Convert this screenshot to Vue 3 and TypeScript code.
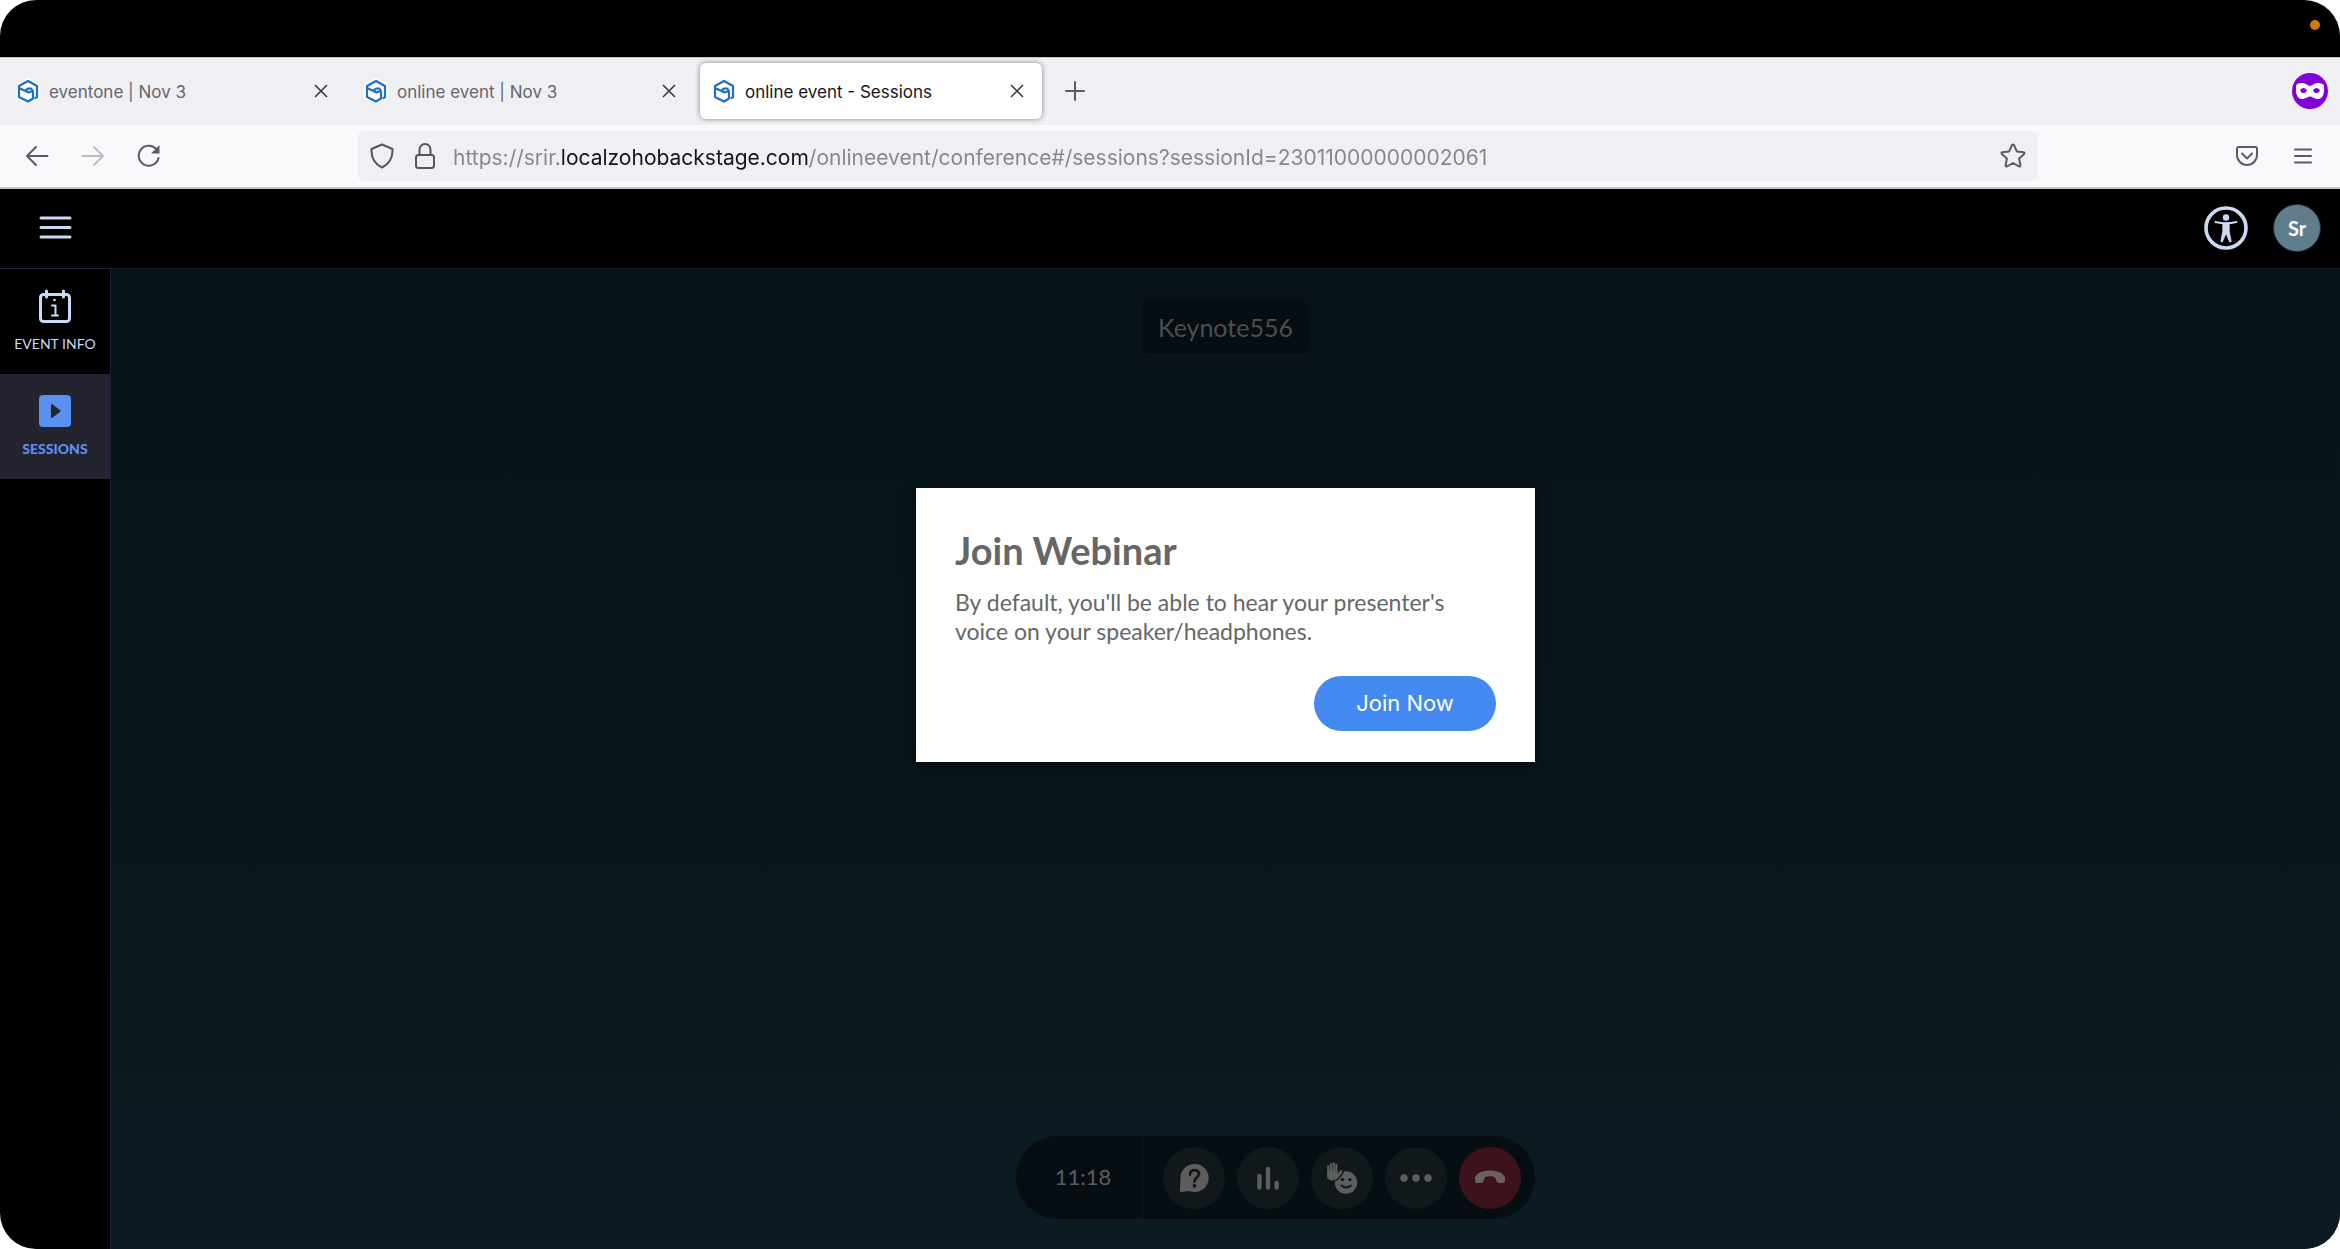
<script setup lang="ts">
import { ref } from 'vue'

interface Tab {
  title: string
  active: boolean
}

const tabs: Tab[] = [
  { title: 'eventone | Nov 3', active: false },
  { title: 'online event | Nov 3', active: false },
  { title: 'online event - Sessions', active: true },
]

const address = ref('https://srir.localzohobackstage.com/onlineevent/conference#/sessions?sessionId=23011000000002061')
</script>

<template>
  <div class="screen">
    <div class="menubar"><span class="recording-dot"></span></div>

    <div class="tabstrip">
      <div v-for="tab in tabs" :key="tab.title" class="tab" :class="{ active: tab.active }">
        <svg class="favicon" viewBox="0 0 24 26" fill="none">
          <path d="M12 1 23 7v13L12 25 1 20V7z" fill="#fff" stroke="#fff" stroke-width="2" stroke-linejoin="round" />
          <path d="M3 10V8l9-5 9 5v11l-1.500 1M3 10v9l9 4.500 5-3v-6.500c0-3.500-3-4.500-5.500-3l-2.500 1.800 3.500 1.700 3.500-1.500M3 10l6 2.800" stroke="#1a70c4" stroke-width="2.200" stroke-linejoin="round" stroke-linecap="round" />
        </svg>
        <span class="tab-title">{{ tab.title }}</span>
        <button class="plain" aria-label="Close tab">
          <svg width="14" height="14" viewBox="0 0 14 14" fill="none" stroke="#33333b" stroke-width="1.500"><path d="M1 1l12 12M13 1 1 13" /></svg>
        </button>
      </div>
      <button class="plain new-tab" aria-label="New tab">
        <svg width="20" height="20" viewBox="0 0 20 20" fill="none" stroke="#5b5b66" stroke-width="2" stroke-linecap="round"><path d="M10 1v18M1 10h18" /></svg>
      </button>
      <svg class="private" width="36" height="36" viewBox="0 0 36 36">
        <circle cx="18" cy="18" r="18" fill="#8000d7" />
        <path fill="#fff" fill-rule="evenodd" d="M4 13c0-2 3-3 6-3 4 0 6 3 8 3s4-3 8-3c3 0 6 1 6 3v4c0 5-2 9-6 9-4 0-5.500-2.500-8-2.500S14 26 10 26c-4 0-6-4-6-9zM8 17.500c1.500 3.400 5.500 3.400 7 0-1.500-3.400-5.500-3.400-7 0zm13 0c1.500 3.400 5.500 3.400 7 0-1.500-3.400-5.500-3.400-7 0z" />
      </svg>
    </div>

    <div class="toolbar">
      <div class="history">
        <button class="plain" aria-label="Back">
          <svg width="24" height="24" viewBox="0 0 24 24" fill="none" stroke="#5b5b66" stroke-width="2" stroke-linecap="round" stroke-linejoin="round"><path d="M22.500 12H2M11 3 2 12l9 9" /></svg>
        </button>
        <button class="plain" aria-label="Forward" disabled>
          <svg width="24" height="24" viewBox="0 0 24 24" fill="none" stroke="#bdbdc2" stroke-width="2" stroke-linecap="round" stroke-linejoin="round"><path d="M1.500 12H22M13 3l9 9-9 9" /></svg>
        </button>
        <button class="plain" aria-label="Reload">
          <svg width="24" height="24" viewBox="0 0 24 24" fill="none"><path d="M19 4.800A10 10 0 1 0 21.500 14" stroke="#5b5b66" stroke-width="2" stroke-linecap="round" /><path d="M22.500 1v8.500H14z" fill="#5b5b66" /></svg>
        </button>
      </div>
      <div class="address-bar">
        <svg width="24" height="26" viewBox="0 0 24 26" fill="none" stroke="#55555c" stroke-width="2" stroke-linejoin="round"><path d="M12 1.500 22.500 6c.4 8-2.500 14.500-10.500 18.500C4 20.500 1.100 14 1.500 6z" /></svg>
        <svg width="20" height="26" viewBox="0 0 20 26" fill="none" stroke="#55555c" stroke-width="2"><rect x="1" y="12" width="18" height="13" rx="2.500" /><path d="M4.500 12V6.500a5.500 5.500 0 0 1 11 0V12" /></svg>
        <input v-model="address" class="address" type="text" aria-label="Address" spellcheck="false" />
        <button class="plain" aria-label="Bookmark this page">
          <svg width="26" height="26" viewBox="0 0 26 26" fill="none" stroke="#5b5b66" stroke-width="2" stroke-linejoin="round"><path d="M12 2.200q1-1.400 2 0l2.800 6.200 6.800.8q1.500.4.500 1.700l-5 4.700 1.300 6.800q0 1.500-1.400 1L13 20l-6 3.400q-1.400.5-1.400-1l1.300-6.800-5-4.700q-1-1.300.5-1.700l6.800-.8z" /></svg>
        </button>
      </div>
      <div class="tools">
        <button class="plain" aria-label="Save to Pocket">
          <svg width="22" height="20" viewBox="0 0 22 20" fill="none" stroke="#5b5b66" stroke-width="2" stroke-linecap="round" stroke-linejoin="round"><path d="M3 1h16a2 2 0 0 1 2 2v6a10 10 0 0 1-20 0V3a2 2 0 0 1 2-2zM6 7.500l5 5 5-5" /></svg>
        </button>
        <button class="plain" aria-label="Open application menu">
          <svg width="18" height="16" viewBox="0 0 18 16" stroke="#5b5b66" stroke-width="2" stroke-linecap="round"><path d="M1 1.500h16M1 8h16M1 14.500h16" /></svg>
        </button>
      </div>
    </div>

    <header class="app-header">
      <button class="plain" aria-label="Menu">
        <svg width="33" height="23" viewBox="0 0 33 23" stroke="#cbdaf3" stroke-width="3" stroke-linecap="round"><path d="M2 2h29M2 11.500h29M2 21h29" /></svg>
      </button>
      <div class="account">
        <button class="plain" aria-label="Accessibility">
          <svg width="44" height="44" viewBox="0 0 44 44" fill="none" stroke="#cbdaf3">
            <circle cx="22" cy="22" r="20" stroke-width="3.600" />
            <circle cx="22" cy="11.500" r="3.200" fill="#cbdaf3" stroke="none" />
            <path d="M11.500 16q10.500 2.500 21 0" stroke-width="2" stroke-linecap="round" />
            <path d="M18.800 17h6.400v8l2 10.500-1.500.5L22 27.500 18.300 36l-1.500-.5 2-10.500z" fill="#cbdaf3" stroke-width=".8" stroke-linejoin="round" />
          </svg>
        </button>
        <button class="avatar">Sr</button>
      </div>
    </header>

    <div class="app-body">
      <nav class="sidebar">
        <a href="#/info" class="nav-item">
          <svg width="34" height="34" viewBox="0 0 34 34" fill="none" stroke="#cbdaf3" stroke-width="3" stroke-linecap="round" stroke-linejoin="round">
            <rect x="2.500" y="5.500" width="29" height="27" rx="3" />
            <path d="M8.500 2v6M25.500 2v6" />
            <path d="M14 16.500h3.500v10M14 26.500h6" stroke-width="2" />
            <circle cx="16.500" cy="11" r="1.300" fill="#cbdaf3" stroke="none" />
          </svg>
          <span>EVENT INFO</span>
        </a>
        <a href="#/sessions" class="nav-item current">
          <svg width="34" height="34" viewBox="0 0 34 34"><rect x="1" y="1" width="32" height="32" rx="4" fill="#5a90ef" /><path d="M13 11v12q0 1.500 1.300.700l8-6q1-.7 0-1.400l-8-6Q13 9.500 13 11z" fill="#232430" /></svg>
          <span>SESSIONS</span>
        </a>
      </nav>

      <main class="stage">
        <div class="session-name">Keynote556</div>
        <div class="dock">
          <div class="controls">
            <time class="clock">11:18</time>
            <div class="buttons">
              <button class="round" aria-label="Questions">
                <svg width="30" height="30" viewBox="0 0 30 30"><path d="M15.500 1a14 14 0 1 1-5 27L2 29q-1 0-1-1l.500-13A14 14 0 0 1 15.500 1z" fill="#5d5d5d" /><path d="M11 11.500c0-6 9-5.500 9-.5 0 3.500-4.500 3.500-4.500 7.500" fill="none" stroke="#11181b" stroke-width="2.800" stroke-linecap="round" /><circle cx="15.500" cy="22.800" r="1.900" fill="#11181b" /></svg>
              </button>
              <button class="round" aria-label="Polls">
                <svg width="24" height="24" viewBox="0 0 24 24" stroke="#5d5d5d" stroke-width="4.400" stroke-linecap="round"><path d="M3.400 10v11.500M12 3v18.500M20.600 17v4.500" /></svg>
              </button>
              <button class="round" aria-label="Reactions">
                <svg width="32" height="32" viewBox="0 0 32 32" fill="none" stroke-linecap="round">
                  <circle cx="20" cy="20.500" r="11.200" fill="#5d5d5d" />
                  <path d="M1.200 9v4c0 4 2 5.200 5 5.200 3.500 0 5-1.200 6.600-3.200l3.400-5c.8-1.500-.8-2.200-1.800-1.200L11.300 12V8z" fill="#5d5d5d" stroke="#11181b" stroke-width="3" paint-order="stroke" />
                  <path d="M1.200 9v4c0 4 2 5.200 5 5.200 3.500 0 5-1.200 6.600-3.200l3.400-5c.8-1.500-.8-2.200-1.800-1.200L11.300 12V8z" fill="#5d5d5d" />
                  <path d="M2.300 4v7M5 2v9M7.700 1.300V11M10.300 2.800V11" stroke="#5d5d5d" stroke-width="2.200" />
                  <g fill="#11181b"><circle cx="16.500" cy="17.500" r="1.600" /><circle cx="24" cy="17.500" r="1.600" /></g>
                  <path d="M15.500 23.500q4.500 4 9.500 0" stroke="#11181b" stroke-width="1.800" />
                </svg>
              </button>
              <button class="round" aria-label="More">
                <svg width="32" height="8" viewBox="0 0 32 8" fill="#5d5d5d"><circle cx="4" cy="4" r="3.700" /><circle cx="16" cy="4" r="3.700" /><circle cx="28" cy="4" r="3.700" /></svg>
              </button>
              <button class="round leave" aria-label="Leave session">
                <svg width="30" height="16" viewBox="0 0 30 16"><path d="M0 7.500C2 2.500 8 .500 15 .500S28 2.500 30 7.500c.3 2.500 0 5.500-2 5.500h-4c-3 0-2.500-4-4.500-6-2-1-7-1-9 0-2 2-1.500 6-4.500 6H2c-2 0-2.300-3-2-5.500z" fill="#6c6062" /></svg>
              </button>
            </div>
          </div>
        </div>
      </main>
    </div>

    <div class="overlay">
      <section class="dialog" role="dialog" aria-labelledby="dialog-title">
        <h1 id="dialog-title">Join Webinar</h1>
        <p>By default, you'll be able to hear your presenter's voice on your speaker/headphones.</p>
        <button class="join">Join Now</button>
      </section>
    </div>
  </div>
</template>

<style>
body {
  margin: 0;
  background: #fff;
}
</style>

<style scoped>
.screen {
  position: relative;
  display: flex;
  flex-direction: column;
  box-sizing: border-box;
  min-height: 100vh;
  overflow: hidden;
  border-radius: 36px;
  background: #000;
  font-family: Lato, sans-serif;
}
.screen *,
.screen *::before {
  box-sizing: border-box;
}
.screen svg {
  display: block;
  flex: none;
}
.plain {
  display: block;
  padding: 0;
  border: 0;
  background: none;
}
.menubar {
  display: flex;
  justify-content: flex-end;
  align-items: center;
  height: 57px;
  padding: 0 20px 8px 0;
}
.recording-dot {
  width: 10px;
  height: 10px;
  border-radius: 50%;
  background: #cf7a0a;
}
.tabstrip {
  display: flex;
  align-items: center;
  gap: 6px;
  height: 68px;
  padding: 0 12px 1px 4px;
  border-top: 1px solid #c4c3c6;
  background: #f0eff4;
}
.tab {
  display: flex;
  align-items: center;
  width: 342px;
  height: 56px;
  padding: 0 18px 0 12px;
  border-radius: 6px;
  color: #66666c;
  font: 17px/24px Inter, sans-serif;
}
.tab.active {
  background: #fff;
  box-shadow: 0 0 5px rgba(60, 60, 70, 0.6);
  color: #15141a;
}
.favicon {
  width: 24px;
  height: 26px;
}
.tab-title {
  flex: 1;
  padding: 2px 0 0 9px;
  white-space: nowrap;
}
.new-tab {
  margin-left: 17px;
}
.private {
  margin-left: auto;
}
.toolbar {
  display: flex;
  align-items: center;
  height: 64px;
  border-bottom: 2px solid #c3c6c8;
  background: #f9f9fb;
}
.history {
  display: flex;
  flex: none;
  gap: 32px;
  width: 358px;
  padding-left: 25px;
}
.address-bar {
  display: flex;
  flex: 1;
  align-items: center;
  height: 50px;
  padding: 0 12px;
  border-radius: 6px;
  background: #f0eff4;
}
.address-bar svg + svg {
  margin-left: 21px;
}
.address {
  flex: 1;
  min-width: 0;
  height: 50px;
  margin: 0 18px;
  padding: 2px 0 0;
  border: 0;
  outline: 0;
  background: linear-gradient(to right, #85858a 109px, #15141a 109px, #15141a 357px, #85858a 357px);
  background-clip: text;
  color: transparent;
  font: 21px/28px Inter, sans-serif;
}
.tools {
  display: flex;
  flex: none;
  align-items: center;
  justify-content: flex-end;
  gap: 36px;
  width: 302px;
  padding-right: 28px;
}
.app-header {
  display: flex;
  align-items: center;
  justify-content: space-between;
  height: 80px;
  padding: 0 19px 2px 39px;
  border-bottom: 1px solid #1d1c39;
}
.account {
  display: flex;
  align-items: center;
  gap: 25px;
}
.avatar {
  width: 48px;
  height: 48px;
  padding: 0;
  border: 1px solid #232b48;
  border-radius: 50%;
  background: #607d8b;
  color: #fff;
  font: bold 20px/24px Lato, sans-serif;
}
.app-body {
  display: flex;
  flex: 1;
}
.sidebar {
  flex: none;
  width: 111px;
  border-right: 1px solid #1d1c39;
}
.nav-item {
  display: flex;
  flex-direction: column;
  align-items: center;
  gap: 12px;
  height: 105px;
  padding-top: 20px;
  color: #cbdaf3;
  font-size: 14px;
  line-height: 18px;
  text-decoration: none;
}
.nav-item.current {
  background: #232430;
  color: #5a90ef;
  font-weight: 900;
}
.stage {
  display: flex;
  flex: 1;
  flex-direction: column;
  align-items: center;
  justify-content: space-between;
  padding: 31px 0 30px;
  background: linear-gradient(#081318, #08151b 50%, #0b191f 80%, #0c1a23);
}
.session-name {
  padding: 11px 16px;
  border-radius: 8px;
  background: #060d13;
  color: #4b4e50;
  font-size: 25px;
  line-height: 32px;
}
.dock {
  display: flex;
  justify-content: flex-end;
  width: 619px;
}
.controls {
  display: flex;
  height: 83px;
  border-radius: 42px;
  background: #060d13;
}
.clock {
  width: 127px;
  padding-left: 8px;
  border-right: 1px solid #11191d;
  color: #5b5d5f;
  font-size: 22px;
  line-height: 82px;
  text-align: center;
}
.buttons {
  display: flex;
  align-items: center;
  gap: 12px;
  padding: 0 14px 0 20px;
}
.round {
  display: grid;
  place-items: center;
  width: 62px;
  height: 62px;
  padding: 0;
  border: 0;
  border-radius: 50%;
  background: #11181b;
}
.round.leave {
  background: #3d121a;
}
.overlay {
  position: absolute;
  inset: 0;
  display: grid;
  place-items: center;
  padding-left: 111px;
}
.dialog {
  display: flex;
  flex-direction: column;
  width: 619px;
  padding: 38px 39px 31px;
  background: #fff;
  box-shadow: 0 2px 10px rgba(0, 0, 0, 0.5);
  color: #666;
}
h1 {
  margin: 0 0 14px;
  font-size: 38px;
  line-height: 48px;
}
p {
  margin: 0 0 30px;
  font-size: 23px;
  line-height: 29px;
}
.join {
  align-self: flex-end;
  width: 182px;
  height: 55px;
  padding: 0;
  border: 0;
  border-radius: 28px;
  background: #4489f0;
  color: #fff;
  font: 22px/28px Inter, sans-serif;
}
</style>
